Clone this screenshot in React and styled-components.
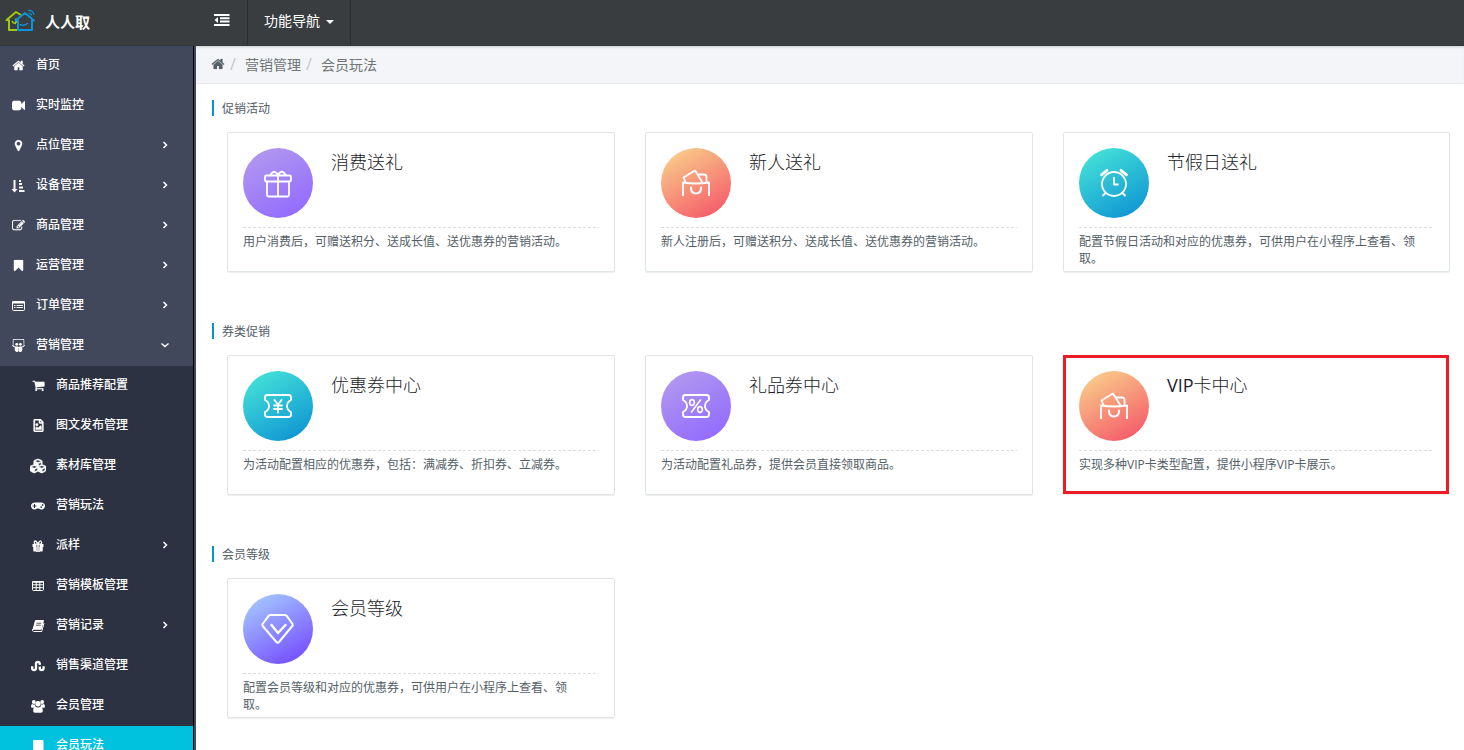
import React from "react";
import styled, { createGlobalStyle } from "styled-components";
import { FaRegFileImage, FaCubes, FaGamepad, FaStumbleupon, FaSlideshare } from "react-icons/fa";

const GlobalStyle = createGlobalStyle`
  * { box-sizing: border-box; }
  body {
    margin: 0;
    background: #fff;
    overflow: hidden;
    font-family: "Open Sans", "Noto Sans CJK SC", sans-serif;
    font-size: 12px;
    color: #546068;
  }
`;

const Page = styled.div`
  height: 750px;
  display: flex;
  flex-direction: column;
  overflow: hidden;
`;
const Header = styled.header`
  height: 46px;
  flex: none;
  display: flex;
  background: #393d40;
  border-bottom: 1px solid #34383b;
  color: #fff;
`;
const Brand = styled.div`
  width: 196px;
  padding: 0 0 3px 5px;
  display: flex;
  align-items: center;
  gap: 9px;
  font-size: 15px;
  font-weight: 700;
`;
const NavButton = styled.div`
  width: ${(p) => p.$width}px;
  padding-bottom: 5px;
  display: flex;
  align-items: center;
  justify-content: center;
  gap: 6px;
  font-size: 14px;
  border-right: 1px solid #2b2e30;
`;
const Caret = styled.span`
  border: 4px solid transparent;
  border-top-color: #fff;
  border-bottom: 0;
  margin-top: 4px;
`;
const Body = styled.div`
  flex: 1;
  min-height: 0;
  display: flex;
`;
const Sidebar = styled.nav`
  width: 196px;
  flex: none;
  background: #42485b;
  border-right: 2px solid #42485b;
  overflow: hidden;
`;
const SideInner = styled.div`
  border-right: 1px solid #000;
`;
const Item = styled.div`
  height: 40px;
  display: flex;
  align-items: center;
  padding: 0 21px 3px ${(p) => (p.$sub ? 29 : 9)}px;
  background: ${(p) => (p.$active ? "#00c1de" : p.$sub ? "#2d3242" : "#42485b")};
  color: #fff;
  font-weight: 500;
`;
const ItemIcon = styled.span`
  width: 18px;
  margin-right: 9px;
  padding-top: 2px;
  display: flex;
  justify-content: center;
`;
const Label = styled.span`
  flex: 1;
  line-height: 18px;
`;
const Arrow = styled.svg`
  width: 14px;
  height: 10px;
  margin-top: 1px;
`;
const Main = styled.main`
  flex: 1;
  min-width: 0;
`;
const Breadcrumb = styled.div`
  height: 38px;
  padding: 0 16px 1px 15px;
  display: flex;
  align-items: center;
  background: #f4f5f9;
  border-bottom: 1px solid #e7e9ec;
  font-size: 14px;
  color: #707578;
  box-shadow: inset 0 3px 3px -2px #c9cbce;
`;
const HomeMark = styled.span`
  display: flex;
  color: #546068;
`;
const Slash = styled.span`
  width: 5px;
  margin: 0 ${(p) => p.$after}px 0 5px;
  font-size: 16px;
  line-height: 18px;
  color: #c4c6c9;
`;
const Content = styled.div`
  padding: 16px 14px 0 16px;
`;
const Section = styled.section`
  margin-bottom: 51px;
`;
const SectionTitle = styled.h2`
  margin: 0 0 16px;
  height: 16px;
  padding-left: 8px;
  border-left: 2px solid #0099c4;
  font-size: 12px;
  font-weight: 400;
  line-height: 17px;
`;
const CardGrid = styled.div`
  display: grid;
  grid-template-columns: 388px 388px 387px;
  column-gap: 30px;
  padding-left: 15px;
`;
const Card = styled.article`
  height: ${(p) => (p.$marked ? 139 : 140)}px;
  margin-right: ${(p) => (p.$marked ? 1 : 0)}px;
  padding: ${(p) => (p.$marked ? "13px 12px 0 13px" : "15px 15px 0")};
  border: ${(p) => (p.$marked ? "3px solid #ed1c24" : "1px solid #dfe5e5")};
  border-radius: ${(p) => (p.$marked ? 0 : 2)}px;
  box-shadow: 0 1px 1px rgba(0, 0, 0, 0.07);
`;
const CardTop = styled.div`
  height: 79px;
  display: flex;
  gap: 18px;
`;
const Disc = styled.div`
  width: 70px;
  height: 70px;
  border-radius: 50%;
  display: flex;
  align-items: center;
  justify-content: center;
  background: linear-gradient(150deg, ${(p) => p.$from} 5%, ${(p) => p.$to} 95%);
`;
const CardTitle = styled.h3`
  margin: 0;
  font-size: 18px;
  font-weight: 300;
  line-height: 28px;
  color: #1c2429;
`;
const Latin = styled.span`
  font-weight: 400;
`;
const Rule = styled.div`
  height: 1px;
  background: repeating-linear-gradient(90deg, #dcdcdc 0 3px, transparent 3px 5px);
`;
const Desc = styled.p`
  margin: 5px 0 0;
  padding-right: 10px;
  line-height: 17px;
`;

const paths = {
  home: "M1472 992v480q0 26-19 45t-45 19h-384v-384h-256v384h-384q-26 0-45-19t-19-45v-480q0-1 .5-3t.5-3l575-474 575 474q1 2 1 6zm223-69l-62 74q-8 9-21 11h-3q-13 0-21-7l-692-577-692 577q-12 8-24 7-13-2-21-11l-62-74q-8-10-7-23.5t11-21.5l719-599q32-26 76-26t76 26l244 204v-195q0-14 9-23t23-9h192q14 0 23 9t9 23v408l219 182q10 8 11 21.5t-7 23.5z",
  video: "M1792 352v1088q0 42-39 59-13 5-25 5-27 0-45-19l-403-403v166q0 119-84.5 203.5t-203.5 84.5h-704q-119 0-203.5-84.5t-84.5-203.5v-704q0-119 84.5-203.5t203.5-84.5h704q119 0 203.5 84.5t84.5 203.5v165l403-402q18-19 45-19 12 0 25 5 39 17 39 59z",
  pin: "M1152 640q0-106-75-181t-181-75-181 75-75 181 75 181 181 75 181-75 75-181zm256 0q0 109-33 179l-364 774q-16 33-47.5 52t-67.5 19-67.5-19-46.5-52l-365-774q-33-70-33-179 0-212 150-362t362-150 362 150 150 362z",
  edit: "M888 1184l116-116-152-152-116 116v56h96v96h56zm440-720q-16-16-33 1l-350 350q-17 17-1 33t33-1l350-350q17-17 1-33zm80 594v190q0 119-84.5 203.5t-203.5 84.5h-832q-119 0-203.5-84.5t-84.5-203.5v-832q0-119 84.5-203.5t203.5-84.5h832q63 0 117 25 15 7 18 23 3 17-9 29l-49 49q-14 14-32 8-23-6-45-6h-832q-66 0-113 47t-47 113v832q0 66 47 113t113 47h832q66 0 113-47t47-113v-126q0-13 9-22l64-64q15-15 35-7t20 29zm-96-738l288 288-672 672h-288v-288zm444 132l-92 92-288-288 92-92q28-28 68-28t68 28l152 152q28 28 28 68t-28 68z",
  bookmark: "M1420 128q23 0 44 9 33 13 52.5 41t19.5 62v1289q0 34-19.5 62t-52.5 41q-19 8-44 8-48 0-83-32l-441-424-441 424q-36 33-83 33-23 0-44-9-33-13-52.5-41t-19.5-62v-1289q0-34 19.5-62t52.5-41q21-9 44-9h1048z",
  cart: "M704 1536q0 52-38 90t-90 38-90-38-38-90 38-90 90-38 90 38 38 90zm896 0q0 52-38 90t-90 38-90-38-38-90 38-90 90-38 90 38 38 90zm128-1088v512q0 24-16.5 42.5t-40.5 21.5l-1044 122q13 60 13 70 0 16-24 64h920q26 0 45 19t19 45-19 45-45 19h-1024q-26 0-45-19t-19-45q0-11 8-31.5t16-36 21.5-40 15.5-29.5l-177-823h-204q-26 0-45-19t-19-45 19-45 45-19h256q16 0 28.5 6.5t19.5 15.5 13 24.5 8 26 5.5 29.5 4.5 26h1201q26 0 45 19t19 45z",
};

const Solid = ({ name, size = 13 }) => (
  <svg width={size} height={size} viewBox="0 0 1792 1792" fill="currentColor" stroke="currentColor" strokeWidth="20">
    <path d={paths[name]} />
  </svg>
);
const Small = ({ children }) => (
  <svg width="14" height="14" viewBox="0 0 14 14" fill="none" stroke="currentColor">
    {children}
  </svg>
);
const SortIcon = () => (
  <Small>
    <path d="M3.5 1v10" strokeWidth="2" />
    <path d="M0.5 10h6l-3 3.5z" fill="currentColor" stroke="none" />
    <path d="M8 2h2M8 5h3M8 8.5h4M8 12h5.5" strokeWidth="2" />
  </Small>
);
const ListIcon = () => (
  <Small>
    <rect x="1.500" y="2.500" width="12" height="9" rx="1" />
    <path d="M1 3.500h13" strokeWidth="2" />
    <path d="M3 6.500h1.500M5.500 6.500h6.500M3 8.500h1.500M5.500 8.500h6.500" />
  </Small>
);
const TableIcon = () => (
  <Small>
    <rect x="1.5" y="2.5" width="11" height="9" rx="1" />
    <path d="M1 3h12" strokeWidth="1.5" />
    <path d="M1.5 5.8h11M1.5 8.7h11M5.2 3v8.5M8.8 3v8.5" />
  </Small>
);
const BookIcon = () => (
  <Small>
    <path d="M4.5 1.5h8l-2.500 9H2z" fill="currentColor" strokeLinejoin="round" />
    <path d="M13 4l-2.300 8.500H2.700Q.700 12 1.700 10" />
    <path d="M5.500 4.200h4.700M5 6.200h4.700" stroke="#2d3242" strokeWidth=".8" />
    <path d="M2.500 11.200h7.700" stroke="#2d3242" strokeWidth=".6" />
  </Small>
);
const GiftIcon = () => (
  <Small>
    <path d="M1.500 5h4v3h-4zM8.500 5h4v3h-4zM2.500 8h3v4h-3zM8.500 8h3v4h-3zM6.200 5h1.600v7H6.200z" fill="currentColor" stroke="none" />
    <path d="M2.500 8h3v4.500h-3zM8.500 8h3v4.500h-3z" fill="currentColor" stroke="none" />
    <path d="M5 12.300h4" />
    <path d="M7 5Q5.500 2 4.300 2T3.300 3.800 5 5.200h4q1.700 0 1.700-1.400T9.700 2 7 5z" strokeWidth="1.300" />
  </Small>
);
const GroupIcon = () => (
  <svg width="14" height="14" viewBox="0 0 14 14" fill="currentColor">
    <circle cx="2.800" cy="3" r="1.900" />
    <circle cx="11.200" cy="3" r="1.900" />
    <circle cx="7" cy="4.700" r="2.700" />
    <path d="M0 7.800Q0 5 1.300 5q1.500 1 2.500.300Q3.800 7 4.800 7.800q-1 .1-1.700.9H1.300Q0 8.700 0 7.800zM14 7.800Q14 5 12.700 5q-1.500 1-2.500.300Q10.200 7 9.200 7.800q1 .1 1.700.9h1.800Q14 8.700 14 7.800z" />
    <path d="M2.200 12Q2.200 7.800 4.500 7.800 7 9.200 9.500 7.800q2.300 0 2.300 4.200 0 1.700-1.800 1.700H4Q2.200 13.700 2.200 12z" />
  </svg>
);
const BlockIcon = () => (
  <Small>
    <rect x="2" y="1" width="10.5" height="13" rx="1" fill="currentColor" stroke="none" />
  </Small>
);
const OutdentIcon = () => (
  <svg width="16" height="12" viewBox="0 0 16 12" fill="none" stroke="#fff" strokeWidth="2">
    <path d="M0 1h15.500M6 4.300h9.500M6 7.600h9.500M0 11h15.500" />
    <path d="M4 3v6L.5 6z" fill="#fff" stroke="none" />
  </svg>
);
const Logo = () => (
  <svg width="31" height="24" viewBox="0 0 31 24" fill="none" strokeWidth="2" strokeLinejoin="round">
    <path d="M16 6L11 3 1.500 11H4V21h8M11 9.500V14" stroke="#a2c614" />
    <path d="M7 12q1 2.500 4 2.500" stroke="#a2c614" strokeWidth="1.500" />
    <path d="M10.500 11.500L20 4l9 7.500h-2V21H13v-9.500z" stroke="#0d93d6" />
    <path d="M14.500 15.500q5 2 8.500-1.500" stroke="#0d93d6" strokeWidth="1.500" />
    <path d="M23 1.500q5-.5 6 4.500M23.500 4q2.500 0 3 2.500" stroke="#0d93d6" strokeWidth="1.200" />
  </svg>
);

const Glyph = ({ children }) => (
  <svg width="36" height="36" viewBox="0 0 36 36" fill="none" stroke="#fff" strokeWidth="1.800" strokeLinecap="round" strokeLinejoin="round">
    {children}
  </svg>
);
const GiftGlyph = () => (
  <Glyph>
    <rect x="5" y="10.500" width="26" height="6" rx="1.500" />
    <path d="M7 16.500V30q0 1.500 1.500 1.500h19Q29 31.500 29 30V16.500M18 10.500v21M10.500 10q3.500-6.500 7.500 0 4-6.500 7.500 0" />
  </Glyph>
);
const BagGlyph = () => (
  <Glyph>
    <path d="M5 31V17.500q13 2 26 0V31" strokeLinecap="butt" />
    <path d="M7.500 17L5.500 12.500 17 5.500 24.500 17.500M20.500 9.500H26q2.500 0 2.500 2.500v5" />
    <path d="M13 22.500q0 6 5 6t5-6" strokeWidth="2" />
  </Glyph>
);
const ClockGlyph = () => (
  <Glyph>
    <circle cx="18" cy="19" r="12" />
    <path d="M18 12v7.500h4.500" strokeLinecap="butt" />
    <path d="M5.500 9.800l5.500-4.500M30.500 9.800L25 5.300" strokeWidth="2.800" />
    <path d="M9.500 28L7 30.500M26.500 28l2.500 2.500" />
  </Glyph>
);
const Ticket = ({ children }) => (
  <Glyph>
    <path d="M7.500 7h21q2.500 0 2.500 2.500V12q-4 2-4 6t4 6v2.500q0 2.500-2.500 2.500h-21Q5 29 5 26.500V24q4-2 4-6t-4-6V9.500Q5 7 7.500 7z" />
    {children}
  </Glyph>
);
const YenGlyph = () => (
  <Ticket>
    <path d="M14.500 12l3.500 4.500 3.500-4.500M18 16.500v8M14 17.500h8M14 21h8" />
  </Ticket>
);
const PercentGlyph = () => (
  <Ticket>
    <ellipse cx="14" cy="14.500" rx="2.300" ry="2.900" strokeWidth="1.600" />
    <ellipse cx="22" cy="21.500" rx="2.300" ry="2.900" strokeWidth="1.600" />
    <path d="M22.500 12L13.500 24" strokeWidth="1.600" />
  </Ticket>
);
const DiamondGlyph = () => (
  <Glyph>
    <path d="M10.500 4h14.500q1 0 1.500.6l6 8.400q.7 1-.2 2L19 31q-1.300 1.500-2.600 0L2.700 15q-.8-1-.1-2L8.800 4.600Q9.500 4 10.500 4z" strokeWidth="2" />
    <path d="M11.500 14l6.500 8 7.500-8" strokeWidth="2.400" />
  </Glyph>
);

const menu = [
  { label: "首页", icon: <Solid name="home" /> },
  { label: "实时监控", icon: <Solid name="video" /> },
  { label: "点位管理", icon: <Solid name="pin" />, arrow: "right" },
  { label: "设备管理", icon: <SortIcon />, arrow: "right" },
  { label: "商品管理", icon: <Solid name="edit" />, arrow: "right" },
  { label: "运营管理", icon: <Solid name="bookmark" />, arrow: "right" },
  { label: "订单管理", icon: <ListIcon />, arrow: "right" },
  { label: "营销管理", icon: <FaSlideshare size={13} />, arrow: "down" },
  { sub: true, label: "商品推荐配置", icon: <Solid name="cart" /> },
  { sub: true, label: "图文发布管理", icon: <FaRegFileImage size={13} stroke="currentColor" strokeWidth={18} /> },
  { sub: true, label: "素材库管理", icon: <FaCubes size={16} stroke="currentColor" strokeWidth={16} /> },
  { sub: true, label: "营销玩法", icon: <FaGamepad size={14} /> },
  { sub: true, label: "派样", icon: <GiftIcon />, arrow: "right" },
  { sub: true, label: "营销模板管理", icon: <TableIcon /> },
  { sub: true, label: "营销记录", icon: <BookIcon />, arrow: "right" },
  { sub: true, label: "销售渠道管理", icon: <FaStumbleupon size={14} /> },
  { sub: true, label: "会员管理", icon: <GroupIcon /> },
  { sub: true, active: true, label: "会员玩法", icon: <BlockIcon /> },
];

const purple = ["#b39bee", "#9068ff"];
const coral = ["#f9d28b", "#f55468"];
const teal = ["#47e5d8", "#0c92d3"];
const violet = ["#a6cdff", "#7346ff"];

const sections = [
  {
    title: "促销活动",
    cards: [
      { title: "消费送礼", colors: purple, icon: <GiftGlyph />, desc: "用户消费后，可赠送积分、送成长值、送优惠券的营销活动。" },
      { title: "新人送礼", colors: coral, icon: <BagGlyph />, desc: "新人注册后，可赠送积分、送成长值、送优惠券的营销活动。" },
      { title: "节假日送礼", colors: teal, icon: <ClockGlyph />, desc: "配置节假日活动和对应的优惠券，可供用户在小程序上查看、领取。" },
    ],
  },
  {
    title: "券类促销",
    cards: [
      { title: "优惠券中心", colors: teal, icon: <YenGlyph />, desc: "为活动配置相应的优惠券，包括：满减券、折扣券、立减券。" },
      { title: "礼品券中心", colors: purple, icon: <PercentGlyph />, desc: "为活动配置礼品券，提供会员直接领取商品。" },
      { latin: "VIP", title: "卡中心", colors: coral, icon: <BagGlyph />, marked: true, desc: "实现多种VIP卡类型配置，提供小程序VIP卡展示。" },
    ],
  },
  {
    title: "会员等级",
    cards: [
      { title: "会员等级", colors: violet, icon: <DiamondGlyph />, desc: "配置会员等级和对应的优惠券，可供用户在小程序上查看、领取。" },
    ],
  },
];

export default function App() {
  return (
    <Page lang="zh-CN">
      <GlobalStyle />
      <Header>
        <Brand><Logo />人人取</Brand>
        <NavButton $width={52}><OutdentIcon /></NavButton>
        <NavButton $width={103}>功能导航<Caret /></NavButton>
      </Header>
      <Body>
        <Sidebar>
          <SideInner>
            {menu.map((m) => (
              <Item key={m.label} $sub={m.sub} $active={m.active}>
                <ItemIcon>{m.icon}</ItemIcon>
                <Label>{m.label}</Label>
                {m.arrow && (
                  <Arrow viewBox="0 0 14 10" fill="none" stroke="#fff" strokeWidth="1.500">
                    <path d={m.arrow === "right" ? "M5.500 2L8.500 5l-3 3" : "M3.500 3.500L7 6.500l3.500-3"} />
                  </Arrow>
                )}
              </Item>
            ))}
          </SideInner>
        </Sidebar>
        <Main>
          <Breadcrumb>
            <HomeMark><Solid name="home" size={14} /></HomeMark>
            <Slash $after={10}>/</Slash>营销管理<Slash $after={10}>/</Slash>会员玩法
          </Breadcrumb>
          <Content>
            {sections.map((s) => (
              <Section key={s.title}>
                <SectionTitle>{s.title}</SectionTitle>
                <CardGrid>
                  {s.cards.map((c) => (
                    <Card key={c.title} $marked={c.marked}>
                      <CardTop>
                        <Disc $from={c.colors[0]} $to={c.colors[1]}>{c.icon}</Disc>
                        <CardTitle>{c.latin && <Latin>{c.latin}</Latin>}{c.title}</CardTitle>
                      </CardTop>
                      <Rule />
                      <Desc>{c.desc}</Desc>
                    </Card>
                  ))}
                </CardGrid>
              </Section>
            ))}
          </Content>
        </Main>
      </Body>
    </Page>
  );
}
